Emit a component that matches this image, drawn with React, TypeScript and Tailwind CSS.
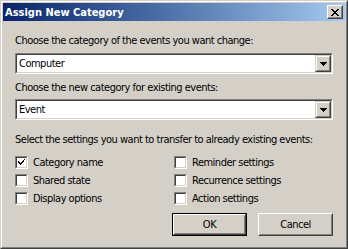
const font = "font-['DejaVu_Sans_Condensed','Liberation_Sans',Arial,sans-serif]";
const txt = "text-[11px] leading-[13px] tracking-[-0.5px]";

function Combo({ value }: { value: string }) {
  return (
    <div className="h-[21px] w-full border border-t-[#808080] border-l-[#808080] border-b-white border-r-white">
      <div className="flex h-full bg-white border border-t-[#404040] border-l-[#404040] border-b-[#d4d0c8] border-r-[#d4d0c8]">
        <div className={`flex-1 flex items-center pl-[2px] ${txt} text-black`}>{value}</div>
        <div className="w-[16px] h-[17px] bg-[#d4d0c8] border border-t-[#d4d0c8] border-l-[#d4d0c8] border-b-[#404040] border-r-[#404040]">
          <div className="w-full h-full flex items-center justify-center border border-t-white border-l-white border-b-[#808080] border-r-[#808080]">
            <svg width="7" height="4" viewBox="0 0 7 4">
              <path d="M0 0h7v1H0zM1 1h5v1H1zM2 2h3v1H2zM3 3h1v1H3z" fill="#000" />
            </svg>
          </div>
        </div>
      </div>
    </div>
  );
}

function Check({ label, checked }: { label: string; checked?: boolean }) {
  return (
    <div className="flex items-center h-[18px]">
      <div className="w-[13px] h-[13px] border border-t-[#808080] border-l-[#808080] border-b-white border-r-white">
        <div className="w-full h-full bg-white border border-t-[#404040] border-l-[#404040] border-b-[#d4d0c8] border-r-[#d4d0c8] flex items-center justify-center">
          {checked && (
            <svg width="7" height="7" viewBox="0 0 7 7">
              <path d="M6 0h1v1H6zM5 1h1v2H5zM4 2h1v2H4zM3 3h1v2H3zM2 4h1v2H2zM1 3h1v2H1zM0 2h1v2H0z" fill="#000" />
            </svg>
          )}
        </div>
      </div>
      <span className={`ml-[5px] ${txt} text-black`}>{label}</span>
    </div>
  );
}

function Btn({ label, isDefault }: { label: string; isDefault?: boolean }) {
  return (
    <div className={`w-[75px] h-[23px] ${isDefault ? "border border-black" : ""}`}>
      <div className="w-full h-full border border-t-white border-l-white border-b-[#404040] border-r-[#404040]">
        <div className={`w-full h-full flex items-center justify-center border border-t-[#d4d0c8] border-l-[#d4d0c8] border-b-[#808080] border-r-[#808080] ${txt} text-black`}>
          {label}
        </div>
      </div>
    </div>
  );
}

export default function App() {
  return (
    <div className={`w-[348px] h-[249px] bg-[#d4d0c8] border border-t-[#d4d0c8] border-l-[#d4d0c8] border-b-[#404040] border-r-[#404040] ${font}`}>
      <div className="w-full h-full border border-t-white border-l-white border-b-[#808080] border-r-[#808080] p-px flex flex-col">
        <div className="h-[18px] flex items-center justify-between bg-linear-to-r from-[#0a246a] to-[#a6caf0] pl-[2px] pr-[2px]">
          <span className="text-white font-bold text-[11px] leading-[13px]">Assign New Category</span>
          <div className="w-[16px] h-[14px] border border-t-white border-l-white border-b-[#404040] border-r-[#404040] bg-[#d4d0c8]">
            <div className="w-full h-full flex items-center justify-center border border-t-[#d4d0c8] border-l-[#d4d0c8] border-b-[#808080] border-r-[#808080]">
              <svg width="8" height="7" viewBox="0 0 8 7">
                <path d="M0 0h2v1H0zM6 0h2v1H6zM1 1h2v1H1zM5 1h2v1H5zM2 2h4v1H2zM3 3h2v1H3zM2 4h4v1H2zM1 5h2v1H1zM5 5h2v1H5zM0 6h2v1H0zM6 6h2v1H6z" fill="#000" />
              </svg>
            </div>
          </div>
        </div>
        <div className="flex-1 px-[12px] flex flex-col text-black">
          <div className={`mt-[13px] ${txt}`}>Choose the category of the events you want change:</div>
          <div className="mt-[6px]"><Combo value="Computer" /></div>
          <div className={`mt-[7px] ${txt}`}>Choose the new category for existing events:</div>
          <div className="mt-[5px]"><Combo value="Event" /></div>
          <div className={`mt-[13px] ${txt}`}>Select the settings you want to transfer to already existing events:</div>
          <div className="mt-[7px] grid grid-cols-2">
            <Check label="Category name" checked />
            <Check label="Reminder settings" />
            <Check label="Shared state" />
            <Check label="Recurrence settings" />
            <Check label="Display options" />
            <Check label="Action settings" />
          </div>
          <div className="mt-[6px] flex justify-end gap-[11px]">
            <Btn label="OK" isDefault />
            <Btn label="Cancel" />
          </div>
        </div>
      </div>
    </div>
  );
}
